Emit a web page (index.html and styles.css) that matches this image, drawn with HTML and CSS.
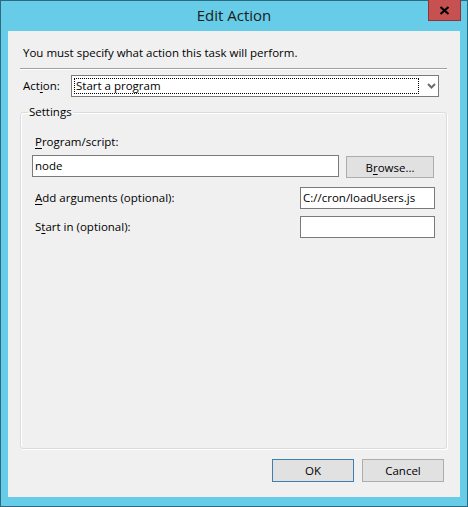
FILE: index.html
```html
<!DOCTYPE html>
<html>
<head>
<meta charset="utf-8">
<link rel="stylesheet" href="styles.css">
</head>
<body>
<div class="window">
  <div class="titlebar">
    <span class="title">Edit Action</span>
    <div class="close">
      <svg width="11" height="9" viewBox="0 0 11 9"><path d="M1.5 1 L9.5 8 M9.5 1 L1.5 8" stroke="#000" stroke-width="2.2" fill="none"/></svg>
    </div>
  </div>
  <div class="client">
    <div class="intro">You must specify what action this task will perform.</div>
    <div class="sep"></div>
    <div class="action-row">
      <span class="action-label">Act<span class="ak">i</span>on:</span>
      <div class="combo">
        <div class="combo-focus">Start a program</div>
        <svg class="chev" width="9" height="6" viewBox="0 0 9 6"><path d="M1 1 L4.5 4.5 L8 1" stroke="#6d6d6d" stroke-width="2" fill="none"/></svg>
      </div>
    </div>
    <fieldset class="group">
      <legend class="legend">Settings</legend>
      <div class="field-label"><span class="ak">P</span>rogram/script:</div>
      <div class="prog-row">
        <div class="input wide">node</div>
        <div class="btn browse">B<span class="ak">r</span>owse...</div>
      </div>
      <div class="opt-row first">
        <span class="opt-label"><span class="ak">A</span>dd arguments (optional):</span>
        <div class="input short">C://cron/loadUsers.js</div>
      </div>
      <div class="opt-row">
        <span class="opt-label">S<span class="ak">t</span>art in (optional):</span>
        <div class="input short"></div>
      </div>
    </fieldset>
    <div class="buttons">
      <div class="btn dlg default">OK</div>
      <div class="btn dlg">Cancel</div>
    </div>
  </div>
</div>
</body>
</html>
```
FILE: styles.css
```css
* { box-sizing: border-box; }
html, body { margin: 0; padding: 0; }
body {
  font-family: "Open Sans", "Noto Sans", sans-serif;
  font-size: 11.5px;
  color: #000;
  background: #66cbe6;
}
.window {
  width: 468px;
  height: 507px;
  border: 1px solid #2c6a80;
  background: #67cce7;
  position: relative;
  display: flex;
  flex-direction: column;
}
.titlebar {
  height: 30px;
  display: flex;
  align-items: center;
  justify-content: center;
  padding-bottom: 2px;
}
.title {
  font-size: 15px;
  color: #1b1b1b;
  line-height: 20px;
}
.close {
  position: absolute;
  top: -1px;
  right: 6px;
  width: 33px;
  height: 21px;
  background: #c75050;
  border: 1px solid #8a3636;
  border-top: none;
  display: flex;
  align-items: center;
  justify-content: center;
}
.client {
  margin: 0 7px;
  height: 466px;
  background: #f0f0f0;
  display: flex;
  flex-direction: column;
  padding-bottom: 15px;
}
.intro {
  margin: 14px 0 0 15px;
  line-height: 16px;
  height: 16px;
}
.sep {
  margin: 7px 13px 0 12px;
  height: 2px;
  border-top: 1px solid #a0a0a0;
  border-bottom: 1px solid #ffffff;
}
.action-row {
  margin-top: 5px;
  display: flex;
  align-items: center;
  height: 22px;
}
.action-label {
  width: 63px;
  padding-left: 15px;
  flex: none;
  line-height: 16px;
}
.ak { text-decoration: underline; text-underline-offset: 2px; }
.combo {
  width: 368px;
  height: 22px;
  border: 1px solid #7a7a7a;
  background: #fff;
  display: flex;
  align-items: center;
  padding: 2px;
}
.combo-focus {
  width: 345px;
  height: 16px;
  border: 1px dotted #000;
  line-height: 14px;
  padding-left: 1px;
}
.chev { margin-left: 8px; }
.group {
  flex: 1;
  margin: 7px 13px 0 12px;
  padding: 14px 11px 0 11px;
  border: 1px solid #dcdcdc;
  border-radius: 3px;
  box-shadow: inset 1px 1px 0 #fff, 1px 1px 0 #fff;
  min-width: 0;
}
.legend {
  padding: 0 1px;
  margin-left: -4px;
  line-height: 16px;
}
.field-label {
  margin-left: 3px;
  line-height: 16px;
}
.prog-row {
  margin-top: 5px;
  display: flex;
  align-items: flex-start;
  gap: 7px;
}
.input {
  height: 22px;
  border: 1px solid #7a7a7a;
  background: #fff;
  line-height: 20px;
  padding-left: 2px;
  white-space: nowrap;
}
.input.wide { width: 307px; }
.input.short { width: 135px; }
.btn {
  background: #e1e1e1;
  border: 1px solid #adadad;
  display: flex;
  align-items: center;
  justify-content: center;
}
.browse {
  margin-top: 1px;
  width: 88px;
  height: 22px;
}
.opt-row {
  display: flex;
  align-items: center;
  justify-content: space-between;
  margin-top: 7px;
}
.opt-row.first { margin-top: 9px; }
.opt-label { margin-left: 3px; line-height: 16px; }
.buttons {
  margin-top: 10px;
  margin-right: 16px;
  display: flex;
  justify-content: flex-end;
  gap: 8px;
}
.dlg {
  width: 82px;
  height: 23px;
}
.default { border-color: #3c7fb1; }
```
